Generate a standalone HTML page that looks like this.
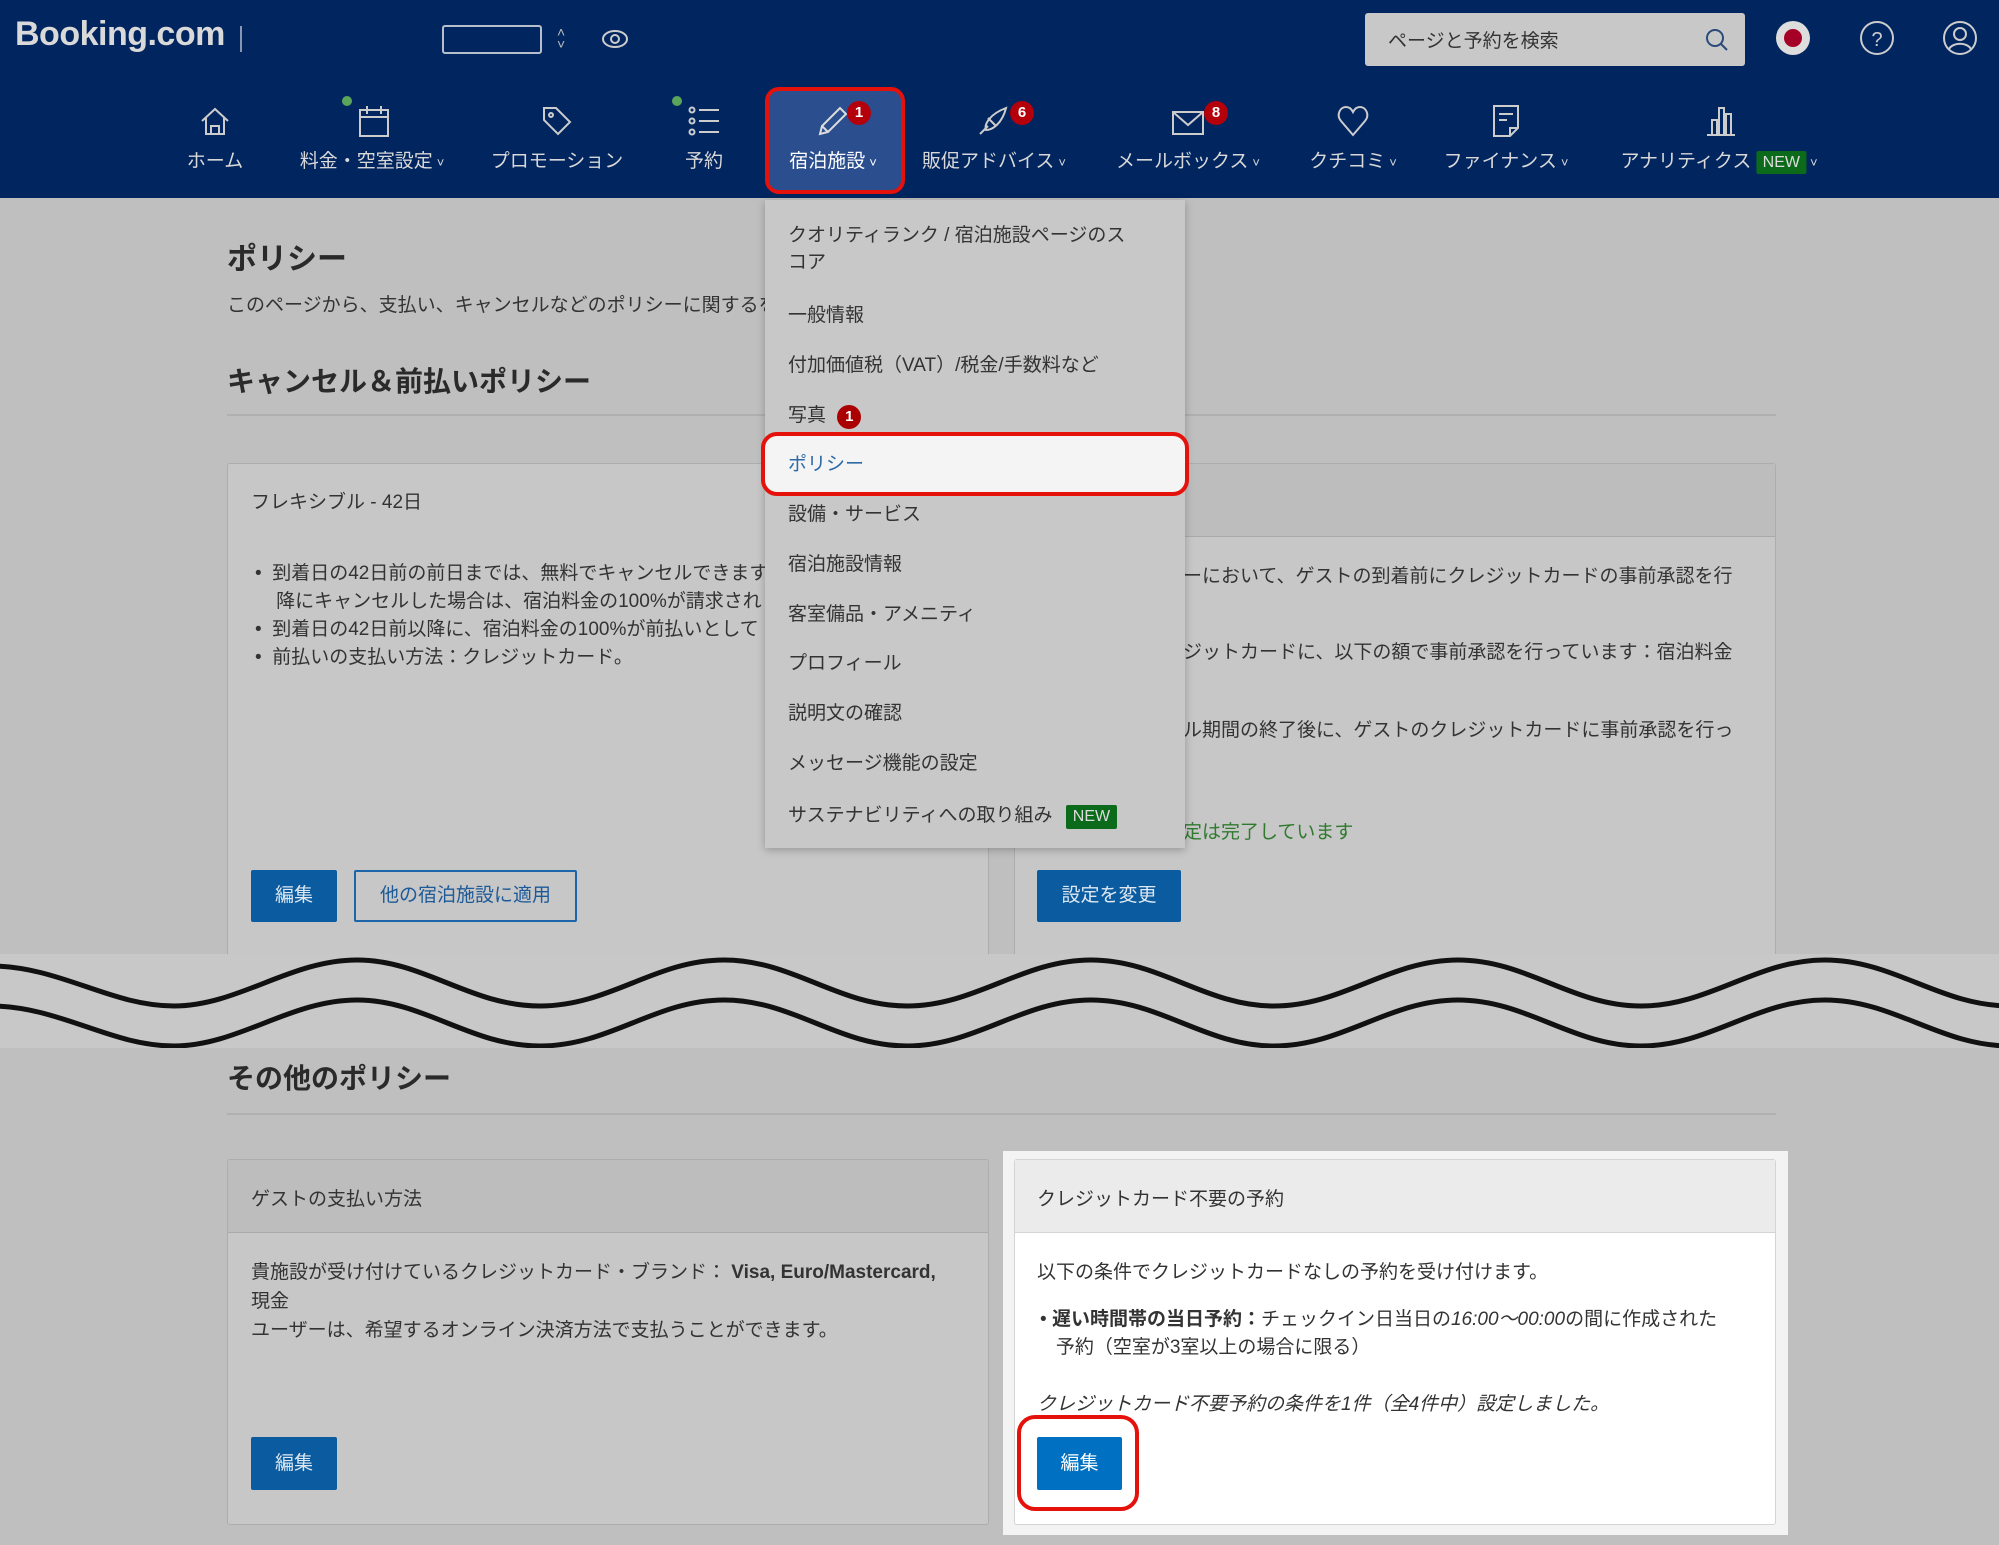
<!DOCTYPE html>
<html><head><meta charset="utf-8"><style>
*{margin:0;padding:0;box-sizing:border-box}
body{width:1999px;height:1545px;position:relative;overflow:hidden;background:#bfbfbf;font-family:"Liberation Sans","Noto Sans CJK JP",sans-serif;color:#333}
.a{position:absolute;white-space:nowrap}
#hdr{position:absolute;left:0;top:0;width:1999px;height:198px;background:#01255f}
.nav{position:absolute;top:146px;font-size:19px;color:#d8d8d8;transform:translateX(-50%);white-space:nowrap}
.nav s{text-decoration:none;font-size:13px;margin-left:4px}
.ic{position:absolute;top:104px;transform:translateX(-50%)}
.badge{position:absolute;width:24px;height:24px;border-radius:12px;background:#b3000a;color:#fff;font-size:15px;font-weight:bold;text-align:center;line-height:24px}
.dot{position:absolute;width:10px;height:10px;border-radius:5px;background:#5aa55a}
.card{position:absolute;background:#c7c7c7;border:1px solid #adadad;border-radius:3px}
.btn{position:absolute;background:#0a5b9f;color:#dfe8f2;font-size:19px;text-align:center;border-radius:2px}
.t19{font-size:19px;color:#333}
.dd{position:absolute;left:765px;top:200px;width:420px;height:648px;background:#c8c8c8;box-shadow:0 2px 8px rgba(0,0,0,.25)}
.di{position:absolute;left:23px;font-size:19px;color:#333;white-space:nowrap}
</style></head><body>
<div id="hdr">
 <div class="a" style="left:15px;top:15px;font-size:34px;font-weight:bold;color:#d9d9d9;letter-spacing:-0.5px">Booking.com</div>
 <div class="a" style="left:240px;top:26px;width:2px;height:26px;background:#8a96b0"></div>
 <div class="a" style="left:442px;top:25px;width:100px;height:29px;border:2px solid #b8bfcc;border-radius:3px"></div>
 <div class="a" style="left:557px;top:26px;color:#bbb;font-size:14px;line-height:12px">˄<br>˅</div>
 <svg class="a" style="left:601px;top:29px" width="28" height="20" viewBox="0 0 28 20"><ellipse cx="14" cy="10" rx="12" ry="8" fill="none" stroke="#ccc" stroke-width="2"/><circle cx="14" cy="10" r="4" fill="none" stroke="#ccc" stroke-width="2"/></svg>
 <div class="a" style="left:1365px;top:13px;width:380px;height:53px;background:#c8c8c8;border-radius:3px"></div>
 <div class="a" style="left:1388px;top:26px;font-size:19px;color:#333">ページと予約を検索</div>
 <svg class="a" style="left:1704px;top:27px" width="26" height="26" viewBox="0 0 26 26"><circle cx="11" cy="11" r="8" fill="none" stroke="#2a4a7a" stroke-width="2"/><line x1="17" y1="17" x2="23" y2="23" stroke="#2a4a7a" stroke-width="2"/></svg>
 <div class="a" style="left:1776px;top:21px;width:34px;height:34px;border-radius:17px;background:#ddd"></div>
 <div class="a" style="left:1784px;top:29px;width:18px;height:18px;border-radius:9px;background:#a50026"></div>
 <svg class="a" style="left:1859px;top:20px" width="36" height="36" viewBox="0 0 36 36"><circle cx="18" cy="18" r="16" fill="none" stroke="#ccc" stroke-width="2"/><text x="18" y="26" font-size="20" fill="#ccc" text-anchor="middle" font-family="Liberation Sans">?</text></svg>
 <svg class="a" style="left:1942px;top:20px" width="36" height="36" viewBox="0 0 36 36"><circle cx="18" cy="18" r="16" fill="none" stroke="#ccc" stroke-width="2"/><circle cx="18" cy="14" r="6" fill="none" stroke="#ccc" stroke-width="2"/><path d="M7 29c4-7 18-7 22 0" fill="none" stroke="#ccc" stroke-width="2"/></svg>

 <div class="a" style="left:765px;top:87px;width:140px;height:107px;background:#2b4e8e;border:4px solid #e5120c;border-radius:14px"></div>

 <svg class="ic" style="left:215px" width="34" height="34" viewBox="0 0 34 34" fill="none" stroke="#ccc" stroke-width="2"><path d="M4 17L17 5l13 12M8 14v16h18V14M13 30v-8h8v8"/></svg>
 <svg class="ic" style="left:374px" width="34" height="34" viewBox="0 0 34 34" fill="none" stroke="#ccc" stroke-width="2"><rect x="3" y="6" width="28" height="26"/><path d="M3 13h28M10 2v8M24 2v8"/></svg>
 <div class="dot" style="left:342px;top:96px"></div>
 <svg class="ic" style="left:557px" width="34" height="34" viewBox="0 0 34 34" fill="none" stroke="#ccc" stroke-width="2"><path d="M4 4h12l14 14-12 12L4 16z"/><circle cx="11" cy="11" r="2"/></svg>
 <svg class="ic" style="left:704px" width="34" height="34" viewBox="0 0 34 34" fill="none" stroke="#ccc" stroke-width="2"><circle cx="5" cy="6" r="2.5"/><circle cx="5" cy="17" r="2.5"/><circle cx="5" cy="28" r="2.5"/><path d="M12 6h20M12 17h20M12 28h20"/></svg>
 <div class="dot" style="left:672px;top:96px"></div>
 <svg class="ic" style="left:831px" width="34" height="34" viewBox="0 0 34 34" fill="none" stroke="#ddd" stroke-width="2"><path d="M6 30l2-8L26 4l6 6-18 18zM8 22l6 6"/></svg>
 <div class="badge" style="left:847px;top:101px">1</div>
 <svg class="ic" style="left:993px" width="34" height="34" viewBox="0 0 34 34" fill="none" stroke="#ccc" stroke-width="2"><path d="M4 30l8-8M10 26c-2-6 4-16 20-22-4 16-14 22-20 22zM12 14l8 8"/></svg>
 <div class="badge" style="left:1010px;top:101px">6</div>
 <svg class="ic" style="left:1188px" width="36" height="34" viewBox="0 0 36 34" fill="none" stroke="#ccc" stroke-width="2"><rect x="3" y="8" width="30" height="22"/><path d="M3 8l15 13 15-13"/></svg>
 <div class="badge" style="left:1204px;top:101px">8</div>
 <svg class="ic" style="left:1353px" width="34" height="34" viewBox="0 0 34 34" fill="none" stroke="#ccc" stroke-width="2"><path d="M17 31L5 17C0 11 4 3 10 3c4 0 6 3 7 5 1-2 3-5 7-5 6 0 10 8 5 14z"/></svg>
 <svg class="ic" style="left:1506px" width="34" height="34" viewBox="0 0 34 34" fill="none" stroke="#ccc" stroke-width="2"><path d="M5 2h24v22l-8 8H5zM21 32v-8h8M10 10h14M10 16h8"/></svg>
 <svg class="ic" style="left:1721px" width="34" height="34" viewBox="0 0 34 34" fill="none" stroke="#ccc" stroke-width="2"><path d="M3 31h28M8 31V16h5v15M15 31V4h5v27M22 31V10h5v21"/></svg>

 <div class="nav" style="left:215px">ホーム</div>
 <div class="nav" style="left:372px">料金・空室設定<s>˅</s></div>
 <div class="nav" style="left:557px">プロモーション</div>
 <div class="nav" style="left:704px">予約</div>
 <div class="nav" style="left:833px;color:#fff">宿泊施設<s>˅</s></div>
 <div class="nav" style="left:994px">販促アドバイス<s>˅</s></div>
 <div class="nav" style="left:1188px">メールボックス<s>˅</s></div>
 <div class="nav" style="left:1353px">クチコミ<s>˅</s></div>
 <div class="nav" style="left:1506px">ファイナンス<s>˅</s></div>
 <div class="nav" style="left:1719px">アナリティクス <span style="background:#0b6b1b;color:#ddd;font-size:16px;padding:3px 6px;border-radius:2px">NEW</span><s>˅</s></div>
</div>

<!-- top content -->
<div class="a" style="left:227px;top:234px;font-size:30px;font-weight:bold;color:#2a2a2a">ポリシー</div>
<div class="a t19" style="left:227px;top:290px">このページから、支払い、キャンセルなどのポリシーに関するを</div>
<div class="a" style="left:227px;top:360px;font-size:28px;font-weight:bold;color:#2a2a2a">キャンセル＆前払いポリシー</div>
<div class="a" style="left:227px;top:414px;width:1549px;height:2px;background:#b0b0b0"></div>

<div class="card" style="left:227px;top:463px;width:762px;height:520px"></div>
<div class="a t19" style="left:251px;top:487px">フレキシブル - 42日</div>
<div class="a t19" style="left:255px;top:560px;line-height:28px">•&nbsp;&nbsp;到着日の42日前の前日までは、無料でキャンセルできます。<br>&nbsp;&nbsp;&nbsp;&nbsp;降にキャンセルした場合は、宿泊料金の100%が請求されます。<br>•&nbsp;&nbsp;到着日の42日前以降に、宿泊料金の100%が前払いとして<br>•&nbsp;&nbsp;前払いの支払い方法：クレジットカード。</div>
<div class="btn" style="left:251px;top:870px;width:86px;height:52px;line-height:52px">編集</div>
<div class="a" style="left:354px;top:870px;width:223px;height:52px;border:2px solid #1d65a8;color:#1d5a98;font-size:19px;text-align:center;line-height:48px;border-radius:2px">他の宿泊施設に適用</div>

<div class="card" style="left:1014px;top:463px;width:762px;height:520px"></div>
<div class="a" style="left:1015px;top:464px;width:760px;height:73px;background:#bdbdbd;border-bottom:1px solid #aaa"></div>
<div class="a t19" style="left:1183px;top:561px">ーにおいて、ゲストの到着前にクレジットカードの事前承認を行</div>
<div class="a t19" style="left:1183px;top:637px">ジットカードに、以下の額で事前承認を行っています：宿泊料金</div>
<div class="a t19" style="left:1183px;top:715px">ル期間の終了後に、ゲストのクレジットカードに事前承認を行っ</div>
<div class="a t19" style="left:1183px;top:817px;color:#2f7a2f">定は完了しています</div>
<div class="btn" style="left:1037px;top:870px;width:144px;height:52px;line-height:52px">設定を変更</div>

<!-- dropdown -->
<div class="dd">
 <div class="di" style="top:22px;line-height:27px">クオリティランク / 宿泊施設ページのス<br>コア</div>
 <div class="di" style="top:100px">一般情報</div>
 <div class="di" style="top:150px">付加価値税（VAT）/税金/手数料など</div>
 <div class="di" style="top:200px">写真 <span style="display:inline-block;width:24px;height:24px;border-radius:12px;background:#a00;color:#fff;font-size:15px;font-weight:bold;text-align:center;line-height:24px;margin-left:6px">1</span></div>
 <div class="a" style="left:-4px;top:232px;width:428px;height:64px;background:#f4f4f4;border:4px solid #e5120c;border-radius:16px"></div>
 <div class="di" style="top:249px;color:#2d6aa8">ポリシー</div>
 <div class="di" style="top:299px">設備・サービス</div>
 <div class="di" style="top:349px">宿泊施設情報</div>
 <div class="di" style="top:399px">客室備品・アメニティ</div>
 <div class="di" style="top:448px">プロフィール</div>
 <div class="di" style="top:498px">説明文の確認</div>
 <div class="di" style="top:548px">メッセージ機能の設定</div>
 <div class="di" style="top:600px">サステナビリティへの取り組み <span style="display:inline-block;background:#0b6b1b;color:#ddd;font-size:16px;padding:3px 7px;margin-left:8px;border-radius:2px">NEW</span></div>
</div>

<!-- wave band -->
<div class="a" style="left:0;top:954px;width:1999px;height:94px;background:#c8c8c8"></div>
<svg class="a" style="left:0;top:954px" width="1999" height="94" viewBox="0 0 1999 94">
<path d="M-10 12 C60 12 110 52 174 52 S290 6 357 6 S470 52 540 52 S655 6 724 6 S838 52 907 52 S1022 6 1091 6 S1205 52 1274 52 S1389 6 1458 6 S1572 52 1641 52 S1756 6 1825 6 S1940 52 2010 52" fill="none" stroke="#111" stroke-width="5"/>
<path d="M-10 52 C60 52 110 92 174 92 S290 46 357 46 S470 92 540 92 S655 46 724 46 S838 92 907 92 S1022 46 1091 46 S1205 92 1274 92 S1389 46 1458 46 S1572 92 1641 92 S1756 46 1825 46 S1940 92 2010 92" fill="none" stroke="#111" stroke-width="5"/>
</svg>

<!-- bottom -->
<div class="a" style="left:227px;top:1057px;font-size:28px;font-weight:bold;color:#2a2a2a">その他のポリシー</div>
<div class="a" style="left:227px;top:1113px;width:1549px;height:2px;background:#b0b0b0"></div>

<div class="card" style="left:227px;top:1159px;width:762px;height:366px"></div>
<div class="a" style="left:228px;top:1160px;width:760px;height:73px;background:#bdbdbd;border-bottom:1px solid #aaa"></div>
<div class="a t19" style="left:251px;top:1184px">ゲストの支払い方法</div>
<div class="a t19" style="left:251px;top:1258px;line-height:29px">貴施設が受け付けているクレジットカード・ブランド： <b>Visa, Euro/Mastercard,</b><br>現金<br>ユーザーは、希望するオンライン決済方法で支払うことができます。</div>
<div class="btn" style="left:251px;top:1437px;width:86px;height:53px;line-height:53px">編集</div>

<div class="a" style="left:1003px;top:1151px;width:785px;height:384px;background:#f3f3f3"></div>
<div class="a" style="left:1014px;top:1159px;width:762px;height:366px;background:#fff;border:1px solid #d4d4d4;border-radius:3px"></div>
<div class="a" style="left:1015px;top:1160px;width:760px;height:73px;background:#ebebeb;border-bottom:1px solid #d4d4d4"></div>
<div class="a t19" style="left:1037px;top:1184px">クレジットカード不要の予約</div>
<div class="a t19" style="left:1037px;top:1257px">以下の条件でクレジットカードなしの予約を受け付けます。</div>
<div class="a t19" style="left:1040px;top:1306px;line-height:28px">•&nbsp;<b>遅い時間帯の当日予約：</b>チェックイン日当日の<i>16:00〜00:00</i>の間に作成された<br>&nbsp;&nbsp;&nbsp;予約（空室が3室以上の場合に限る）</div>
<div class="a t19" style="left:1037px;top:1389px;font-style:italic">クレジットカード不要予約の条件を1件（全4件中）設定しました。</div>
<div class="a" style="left:1017px;top:1415px;width:122px;height:96px;border:4px solid #e5120c;border-radius:18px"></div>
<div class="btn" style="left:1037px;top:1437px;width:85px;height:53px;line-height:53px;background:#0071c2;color:#fff">編集</div>
</body></html>
